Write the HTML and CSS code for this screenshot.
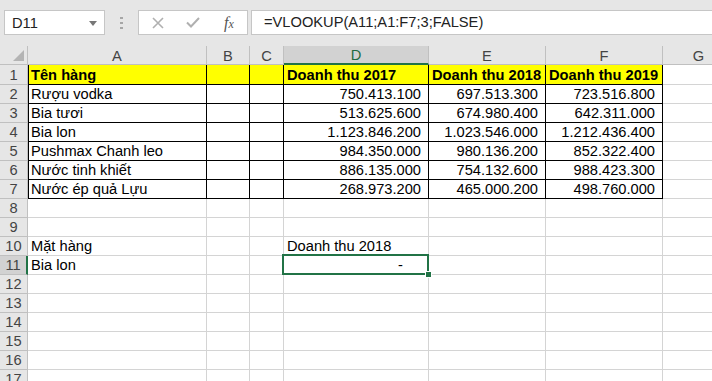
FILE: index.html
```html
<!DOCTYPE html>
<html lang="vi">
<head>
  <meta charset="UTF-8">
  <meta name="viewport" content="width=device-width, initial-scale=1.0">
  <title>Doanh thu - VLOOKUP</title>
  <link rel="stylesheet" href="styles.css">
</head>
<body>
  <div class="toolbar">
    <div class="name-box">
      <span>D11</span>
      <svg class="caret" width="8" height="5" viewBox="0 0 8 5"><path d="M0 0h8L4 5z" fill="#777"/></svg>
    </div>
    <svg class="grip" width="3" height="12" viewBox="0 0 3 12">
      <rect x="0" y="0" width="3" height="2" fill="#a6a6a6"/>
      <rect x="0" y="5" width="3" height="2" fill="#a6a6a6"/>
      <rect x="0" y="10" width="3" height="2" fill="#a6a6a6"/>
    </svg>
    <div class="fx-buttons">
      <svg width="12" height="12" viewBox="0 0 12 12"><path d="M1 1l10 10M11 1L1 11" stroke="#b0b0b0" stroke-width="1.6" fill="none"/></svg>
      <svg width="14" height="11" viewBox="0 0 14 11"><path d="M1 5.5l4 4L13 1" stroke="#b0b0b0" stroke-width="2" fill="none"/></svg>
      <span class="fx">f<span>x</span></span>
    </div>
    <div class="formula">=VLOOKUP(A11;A1:F7;3;FALSE)</div>
  </div>

  <div class="sheet" id="sheet">
    <div class="corner"></div>
  </div>

  <script>
    const cols = ['A', 'B', 'C', 'D', 'E', 'F', 'G', 'H'];

    // noi dung bang (hang -> cot)
    const data = {
      1: ['Tên hàng', '', '', 'Doanh thu 2017', 'Doanh thu 2018', 'Doanh thu 2019'],
      2: ['Rượu vodka', '', '', '750.413.100', '697.513.300', '723.516.800'],
      3: ['Bia tươi', '', '', '513.625.600', '674.980.400', '642.311.000'],
      4: ['Bia lon', '', '', '1.123.846.200', '1.023.546.000', '1.212.436.400'],
      5: ['Pushmax Chanh leo', '', '', '984.350.000', '980.136.200', '852.322.400'],
      6: ['Nước tinh khiết', '', '', '886.135.000', '754.132.600', '988.423.300'],
      7: ['Nước ép quả Lựu', '', '', '268.973.200', '465.000.200', '498.760.000'],
      10: ['Mặt hàng', '', '', 'Doanh thu 2018'],
      11: ['Bia lon', '', '', '-']
    };

    const sheet = document.getElementById('sheet');

    cols.forEach(c => {
      const h = document.createElement('div');
      h.className = 'col-head' + (c === 'D' ? ' active' : '');
      h.textContent = c === 'H' ? '' : c;
      sheet.appendChild(h);
    });

    for (let r = 1; r <= 17; r++) {
      const rh = document.createElement('div');
      rh.className = 'row-head' + (r === 11 ? ' active' : '');
      rh.textContent = r;
      sheet.appendChild(rh);

      const row = data[r] || [];
      cols.forEach((c, i) => {
        const cell = document.createElement('div');
        const value = row[i] || '';
        let cls = 'cell';
        if (r <= 7 && i < 6) cls += ' boxed';
        if (r <= 7 && i === 0) cls += ' first';
        if (r === 1 && i < 6) cls += ' title';
        if ((r >= 2 && r <= 7 && i >= 3) || (r === 11 && i === 3)) cls += ' num';
        if (r === 11 && i === 3) cls += ' acct selected';
        cell.className = cls;
        cell.textContent = value;
        sheet.appendChild(cell);
      });
    }
  </script>
</body>
</html>
```

FILE: styles.css
```css
/* Khung chung */
body {
  margin: 0;
  background-color: #e6e6e6;
  font-family: "Liberation Sans", Arial, sans-serif;
  overflow: hidden;
  height: 381px;
}

/* Thanh cong thuc */
.toolbar {
  height: 46px;
  display: flex;
  align-items: flex-start;
  padding: 10px 0 0 4px;
  box-sizing: border-box;
}

.name-box {
  width: 101px;
  height: 25px;
  box-sizing: border-box;
  background-color: white;
  border: 1px solid #c6c6c6;
  display: flex;
  align-items: center;
  justify-content: space-between;
  padding: 0 7px 0 7px;
  font-size: 14.67px;
  color: #222;
}

.caret {
  margin-top: 1px;
}

.grip {
  margin: 7px 15px 0 15px;
}

.fx-buttons {
  width: 110px;
  height: 25px;
  box-sizing: border-box;
  background-color: white;
  border: 1px solid #c6c6c6;
  display: flex;
  align-items: center;
  padding-left: 13px;
  gap: 22px;
}

.fx {
  font-family: "Liberation Serif", "Times New Roman", serif;
  font-style: italic;
  font-size: 16px;
  color: #555;
  margin-left: 2px;
}

.fx span {
  font-size: 12px;
}

.formula {
  flex: 1;
  height: 25px;
  margin-left: 3px;
  box-sizing: border-box;
  background-color: white;
  border: 1px solid #c6c6c6;
  border-right: none;
  padding: 3px 0 0 12px;
  font-size: 14.67px;
  color: #222;
}

/* Bang tinh */
.sheet {
  display: grid;
  grid-template-columns: 28px 179px 43px 34px 145px 117px 117px 72px 60px;
  grid-template-rows: 19px 20px repeat(16, 19px);
  background-color: white;
  font-size: 14.67px;
}

.corner {
  background-color: #e6e6e6;
  border-right: 1px solid #c0c0c0;
  border-bottom: 1px solid #c0c0c0;
  position: relative;
}

.corner::after {
  content: "";
  position: absolute;
  right: 3px;
  bottom: 3px;
  border-left: 11px solid transparent;
  border-bottom: 11px solid #b4b4b4;
}

.col-head, .row-head {
  background-color: #e6e6e6;
  color: #444;
  display: flex;
  justify-content: center;
  align-items: center;
  box-sizing: border-box;
  border-right: 1px solid #c0c0c0;
  border-bottom: 1px solid #c0c0c0;
}

.col-head {
  padding-top: 1px;
}

.col-head.active {
  background-color: #d2d2d2;
  color: #1e6b41;
  border-bottom: 2px solid #217346;
}

.row-head {
  align-items: flex-end;
  line-height: 18px;
}

.row-head.active {
  background-color: #d2d2d2;
  border-right: 2px solid #217346;
}

.cell {
  box-sizing: border-box;
  border-right: 1px solid #d4d4d4;
  border-bottom: 1px solid #d4d4d4;
  padding: 0 2px 0 3px;
  display: flex;
  align-items: flex-end;
  line-height: 18px;
  white-space: nowrap;
  color: #000;
  min-width: 0;
}

.cell.boxed {
  border-right-color: #000;
  border-bottom-color: #000;
}

.cell.first {
  border-left: 1px solid #000;
  padding-left: 2px;
}

.cell.title {
  background-color: #ffff00;
  font-weight: bold;
}

.cell.num {
  justify-content: flex-end;
  padding-right: 7px;
}

.cell.acct {
  padding-right: 25px;
}

/* O dang chon */
.cell.selected {
  position: relative;
  z-index: 2;
}

.cell.selected::before {
  content: "";
  position: absolute;
  left: -2px;
  top: -2px;
  right: -1px;
  bottom: -1px;
  border: 2px solid #217346;
}

.cell.selected::after {
  content: "";
  position: absolute;
  right: -4px;
  bottom: -4px;
  width: 5px;
  height: 5px;
  background-color: #217346;
  border: 1px solid white;
}
```
